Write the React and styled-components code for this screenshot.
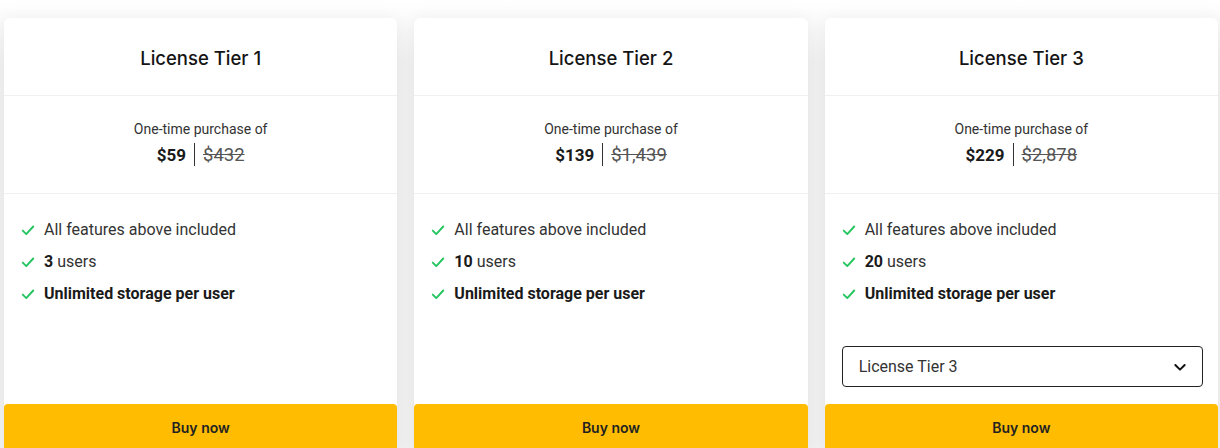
import styled, { createGlobalStyle } from "styled-components";

const GlobalStyle = createGlobalStyle`
  * { box-sizing: border-box; }
  body {
    margin: 0;
    background: #ffffff;
    font-family: Roboto, "Liberation Sans", sans-serif;
    color: #222;
    overflow: hidden;
  }
`;

const Grid = styled.div`
  display: grid;
  grid-template-columns: repeat(3, 1fr);
  gap: 17px;
  padding: 18px 2px 0 4px;
  background: linear-gradient(#ffffff 0, #f1f1f1 60px);
  height: 448px;
`;

const Card = styled.div`
  display: flex;
  flex-direction: column;
  height: 434px;
  background: #fff;
  border-radius: 6px;
  box-shadow: 0 2px 18px rgba(0, 0, 0, 0.06);
`;

const Header = styled.div`
  height: 78px;
  display: flex;
  align-items: center;
  justify-content: center;
  border-bottom: 1px solid #f0f0f0;
`;

const Title = styled.h2`
  margin: 0;
  padding-top: 3px;
  font-family: Inter, Roboto, sans-serif;
  font-size: 18.5px;
  font-weight: 500;
  color: #141414;
`;

const PriceBlock = styled.div`
  height: 98px;
  display: flex;
  flex-direction: column;
  align-items: center;
  padding-top: 24px;
  border-bottom: 1px solid #f0f0f0;
`;

const PriceCaption = styled.div`
  font-size: 14px;
  color: #333;
  line-height: 18px;
`;

const PriceRow = styled.div`
  display: flex;
  align-items: center;
  gap: 8px;
  margin-top: 5px;
`;

const Price = styled.span`
  font-size: 17px;
  font-weight: 700;
  color: #1a1a1a;
`;

const Divider = styled.span`
  width: 1px;
  height: 23px;
  background: #333;
`;

const OldPrice = styled.span`
  font-size: 18.5px;
  color: #555;
  text-decoration: line-through;
`;

const Features = styled.div`
  flex: 1;
  display: flex;
  flex-direction: column;
  padding: 24px 15px 17px 17px;
`;

const List = styled.ul`
  list-style: none;
  margin: 0;
  padding: 0;
  display: flex;
  flex-direction: column;
  gap: 8px;
  flex: 1;
`;

const Item = styled.li`
  display: flex;
  align-items: center;
  gap: 9px;
  font-size: 16px;
  line-height: 24px;
  color: #333;
  font-weight: ${(p) => (p.$bold ? 700 : 400)};

  b { font-weight: 700; color: #1a1a1a; }
  ${(p) => p.$bold && "color: #1a1a1a;"}
`;

const Select = styled.div`
  height: 41px;
  border: 1px solid #222;
  border-radius: 4px;
  display: flex;
  align-items: center;
  justify-content: space-between;
  padding: 0 14px 0 16px;
  font-size: 16px;
  color: #333;
`;

const BuyButton = styled.button`
  height: 48px;
  border: none;
  border-radius: 4px;
  background: #ffbc00;
  color: #222;
  font-family: Inter, Roboto, sans-serif;
  font-size: 14px;
  font-weight: 600;
  padding-bottom: 2px;
  cursor: pointer;
`;

const Check = () => (
  <svg width="14" height="14" viewBox="0 0 24 24" fill="none" stroke="#22c55e" strokeWidth="3.2" strokeLinecap="round" strokeLinejoin="round">
    <path d="M3 13l6 6L21 6" />
  </svg>
);

const Chevron = () => (
  <svg width="16" height="16" viewBox="0 0 24 24" fill="none" stroke="#111" strokeWidth="3" strokeLinecap="round" strokeLinejoin="round">
    <path d="M5 9l7 7 7-7" />
  </svg>
);

const tiers = [
  { name: "License Tier 1", price: "$59", old: "$432", users: 3 },
  { name: "License Tier 2", price: "$139", old: "$1,439", users: 10 },
  { name: "License Tier 3", price: "$229", old: "$2,878", users: 20, select: true },
];

export default function App() {
  return (
    <>
      <GlobalStyle />
      <Grid>
        {tiers.map((t) => (
          <Card key={t.name}>
            <Header>
              <Title>{t.name}</Title>
            </Header>
            <PriceBlock>
              <PriceCaption>One-time purchase of</PriceCaption>
              <PriceRow>
                <Price>{t.price}</Price>
                <Divider />
                <OldPrice>{t.old}</OldPrice>
              </PriceRow>
            </PriceBlock>
            <Features>
              <List>
                <Item><Check />All features above included</Item>
                <Item><Check /><span><b>{t.users}</b> users</span></Item>
                <Item $bold><Check />Unlimited storage per user</Item>
              </List>
              {t.select && (
                <Select>
                  <span>{t.name}</span>
                  <Chevron />
                </Select>
              )}
            </Features>
            <BuyButton>Buy now</BuyButton>
          </Card>
        ))}
      </Grid>
    </>
  );
}
